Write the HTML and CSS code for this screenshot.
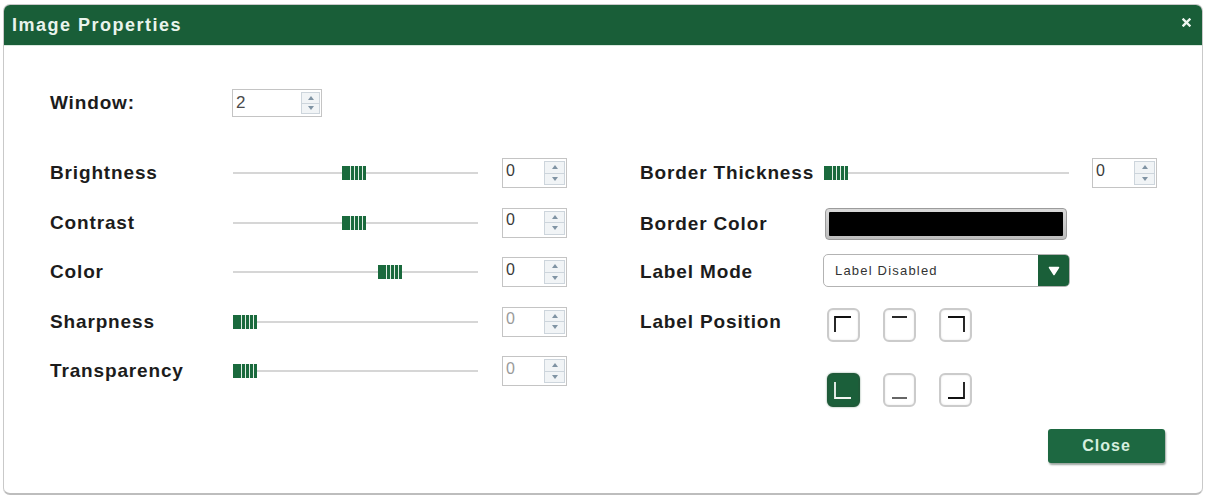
FILE: index.html
```html
<!DOCTYPE html>
<html>
<head>
<meta charset="utf-8">
<link rel="stylesheet" href="styles.css">
</head>
<body>
<div class="dialog">
  <div class="header">
    <span class="title">Image Properties</span>
    <svg class="x" width="9" height="9" viewBox="0 0 9 9"><path d="M1.5 1.5 L7.5 7.5 M7.5 1.5 L1.5 7.5" stroke="#eef6f0" stroke-width="2.4" stroke-linecap="square"/></svg>
  </div>
  <div class="body">
    <div class="window-row">
      <span class="label">Window:</span>
      <div class="spin spin-lg"><span class="val dark">2</span><span class="btns"><i class="up"></i><i class="down"></i></span></div>
    </div>
    <div class="columns">
      <div class="col col-left">
        <div class="row">
          <span class="label">Brightness</span>
          <div class="slider"><span class="thumb" style="left:109px"></span></div>
          <div class="spin"><span class="val">0</span><span class="btns"><i class="up"></i><i class="down"></i></span></div>
        </div>
        <div class="row">
          <span class="label">Contrast</span>
          <div class="slider"><span class="thumb" style="left:109px"></span></div>
          <div class="spin"><span class="val">0</span><span class="btns"><i class="up"></i><i class="down"></i></span></div>
        </div>
        <div class="row">
          <span class="label">Color</span>
          <div class="slider"><span class="thumb" style="left:145px"></span></div>
          <div class="spin"><span class="val">0</span><span class="btns"><i class="up"></i><i class="down"></i></span></div>
        </div>
        <div class="row">
          <span class="label">Sharpness</span>
          <div class="slider"><span class="thumb" style="left:0px"></span></div>
          <div class="spin"><span class="val light">0</span><span class="btns"><i class="up"></i><i class="down"></i></span></div>
        </div>
        <div class="row">
          <span class="label">Transparency</span>
          <div class="slider"><span class="thumb" style="left:0px"></span></div>
          <div class="spin"><span class="val light">0</span><span class="btns"><i class="up"></i><i class="down"></i></span></div>
        </div>
      </div>
      <div class="col col-right">
        <div class="row">
          <span class="label">Border Thickness</span>
          <div class="slider"><span class="thumb" style="left:0px"></span></div>
          <div class="spin"><span class="val">0</span><span class="btns"><i class="up"></i><i class="down"></i></span></div>
        </div>
        <div class="row">
          <span class="label">Border Color</span>
          <div class="color-box"><span class="swatch"></span></div>
        </div>
        <div class="row">
          <span class="label">Label Mode</span>
          <div class="select"><span class="sel-text">Label Disabled</span><span class="sel-btn"><svg width="12" height="10" viewBox="0 0 12 10"><path d="M1.5 1.5 H10.5 L6 8.5 Z" fill="#fff" stroke="#fff" stroke-width="1.5" stroke-linejoin="round"/></svg></span></div>
        </div>
        <div class="row row-pos">
          <span class="label">Label Position</span>
          <div class="pos-grid">
            <span class="pos"><svg width="29" height="30" viewBox="0 0 29 30"><path d="M6 22 V7 H22" fill="none" stroke="#111" stroke-width="1.8"/></svg></span>
            <span class="pos"><svg width="29" height="30" viewBox="0 0 29 30"><path d="M7 7 H22" fill="none" stroke="#111" stroke-width="1.8"/></svg></span>
            <span class="pos"><svg width="29" height="30" viewBox="0 0 29 30"><path d="M7 7 H23 V22" fill="none" stroke="#111" stroke-width="1.8"/></svg></span>
            <span class="pos sel"><svg width="29" height="30" viewBox="0 0 29 30"><path d="M6 7 V23 H22" fill="none" stroke="#f2f7f3" stroke-width="1.8"/></svg></span>
            <span class="pos"><svg width="29" height="30" viewBox="0 0 29 30"><path d="M7 23 H22" fill="none" stroke="#333" stroke-width="1.5"/></svg></span>
            <span class="pos"><svg width="29" height="30" viewBox="0 0 29 30"><path d="M7 23 H23 V7" fill="none" stroke="#111" stroke-width="1.8"/></svg></span>
          </div>
        </div>
      </div>
    </div>
    <div class="footer">
      <button class="close-btn">Close</button>
    </div>
  </div>
</div>
</body>
</html>
```

FILE: styles.css
```css
html, body {
  margin: 0;
  padding: 0;
  background: #ffffff;
}
body {
  font-family: "Liberation Sans", Arial, sans-serif;
  color: #1c1c1c;
}
.dialog {
  margin: 4px 0 0 3px;
  width: 1200px;
  height: 491px;
  box-sizing: border-box;
  border: 1px solid #c9c9c9;
  border-bottom: 2px solid #bdbdbd;
  border-radius: 7px;
  overflow: hidden;
  background: #fff;
}
.header {
  height: 40px;
  background: #195e38;
  display: flex;
  align-items: center;
  justify-content: space-between;
  padding: 0 11px 0 8px;
  border-bottom: 1px solid #d9e8de;
}
.title {
  color: #e9f4ec;
  font-weight: bold;
  font-size: 18px;
  letter-spacing: 1.5px;
}
.x {
  margin-top: -6px;
}
.body {
  padding: 43px 37px 0 46px;
}
.label {
  font-weight: bold;
  font-size: 19px;
  letter-spacing: 0.85px;
  white-space: nowrap;
  color: #1c1c1c;
}
.window-row {
  display: flex;
  align-items: center;
  height: 28px;
}
.window-row .label {
  width: 182px;
}
.columns {
  display: flex;
  gap: 73px;
  margin-top: 41px;
}
.col {
  display: flex;
  flex-direction: column;
  gap: 19.5px;
}
.row {
  display: grid;
  align-items: center;
  height: 30px;
}
.col-left .row {
  grid-template-columns: 159px 245px 65px;
  column-gap: 24px;
}
.col-right .row {
  grid-template-columns: 161px 245px 65px;
  column-gap: 23px;
}
.slider {
  position: relative;
  height: 14px;
}
.slider::before {
  content: "";
  position: absolute;
  left: 0;
  right: 0;
  top: 6px;
  height: 2px;
  background: #d6d6d6;
}
.thumb {
  position: absolute;
  top: 0;
  width: 24px;
  height: 14px;
  background: linear-gradient(90deg,
    #1a6a3d 0 8px, #e4efe7 8px 9px,
    #1a6a3d 9px 12px, #e4efe7 12px 13px,
    #1a6a3d 13px 16px, #e4efe7 16px 17px,
    #1a6a3d 17px 20px, #e4efe7 20px 21px,
    #1a6a3d 21px 24px);
}
.spin {
  position: relative;
  width: 65px;
  height: 30px;
  box-sizing: border-box;
  border: 1px solid #c4c4c4;
  background: #fff;
  display: flex;
  align-items: center;
  justify-content: space-between;
  padding: 0 1px 0 3px;
}
.spin-lg {
  width: 90px;
  height: 28px;
}
.val {
  font-size: 16px;
  color: #3a3a3a;
  margin-top: -5px;
}
.val.dark {
  font-size: 17px;
  color: #4a4a4a;
  margin-top: 0;
}
.val.light {
  color: #9a9a9a;
}
.btns {
  width: 21px;
  height: 24px;
  box-sizing: border-box;
  border: 1px solid #cdd5dc;
  background: #f1f4f6;
  display: flex;
  flex-direction: column;
}
.spin-lg .btns {
  width: 19px;
  height: 22px;
}
.btns i {
  flex: 1;
  display: flex;
  align-items: center;
  justify-content: center;
}
.btns i.up {
  border-bottom: 1px solid #cdd5dc;
}
.btns i.up::after {
  content: "";
  border-left: 3px solid transparent;
  border-right: 3px solid transparent;
  border-bottom: 4px solid #7f93a3;
}
.btns i.down::after {
  content: "";
  border-left: 3px solid transparent;
  border-right: 3px solid transparent;
  border-top: 4px solid #7f93a3;
}
.color-box {
  grid-column: 2 / 3;
  margin-left: 1px;
  width: 242px;
  height: 32px;
  box-sizing: border-box;
  border: 1px solid #9c9c9c;
  border-radius: 4px;
  background: linear-gradient(#d9d9d9, #bdbdbd);
  padding: 3px;
  display: flex;
}
.swatch {
  flex: 1;
  background: #000;
  border-radius: 1px;
}
.select {
  grid-column: 2 / 4;
  margin-left: -1px;
  margin-top: -3px;
  width: 247px;
  height: 33px;
  box-sizing: border-box;
  border: 1px solid #b3b3b3;
  border-radius: 5px;
  display: flex;
  align-items: stretch;
  overflow: hidden;
}
.sel-text {
  flex: 1;
  display: flex;
  align-items: center;
  padding-left: 11px;
  font-size: 13px;
  letter-spacing: 1.2px;
  color: #333;
}
.sel-btn {
  width: 31px;
  background: #1a5f39;
  display: flex;
  align-items: center;
  justify-content: center;
}
.row-pos {
  align-items: start;
  height: auto;
}
.row-pos .label {
  line-height: 30px;
}
.pos-grid {
  grid-column: 2 / 4;
  margin-left: 3px;
  margin-top: 1.5px;
  display: grid;
  grid-template-columns: repeat(3, 33px);
  grid-auto-rows: 34px;
  column-gap: 23px;
  row-gap: 31px;
}
.pos {
  box-sizing: border-box;
  border: 2px solid #cbcbcb;
  border-radius: 6px;
  background: #fff;
  box-shadow: inset 0 0 2px #e2e2e2;
  display: flex;
  align-items: center;
  justify-content: center;
}
.pos.sel {
  background: #1b5f3a;
  border-color: #1f5a39;
  box-shadow: 0 0 2px #7a9a86;
}
.footer {
  display: flex;
  justify-content: flex-end;
  margin-top: 22px;
}
.close-btn {
  width: 117px;
  height: 34px;
  background: #1d6841;
  color: #d6efdf;
  border: none;
  border-radius: 3px;
  box-shadow: 1px 2px 2px #9aa59f;
  font-family: "Liberation Sans", Arial, sans-serif;
  font-weight: bold;
  font-size: 16px;
  letter-spacing: 1px;
  padding: 0;
}
```
